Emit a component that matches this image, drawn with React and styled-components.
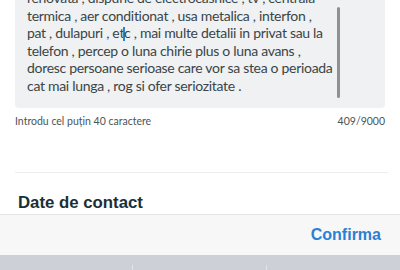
import styled, { createGlobalStyle } from 'styled-components'

const lines = [
  'renovata , dispune de electrocasnice , tv , centrala',
  'termica , aer conditionat , usa metalica , interfon ,',
  null,
  'telefon , percep o luna chirie plus o luna avans ,',
  'doresc persoane serioase care vor sa stea o perioada',
  'cat mai lunga , rog si ofer seriozitate .',
]

export default function App() {
  return (
    <Page>
      <GlobalStyle />
      <Editor>
        <TextBox>
          <Body>
            {lines.map((line, i) =>
              line === null ? (
                <Line key={i}>
                  pat , dulapuri , et
                  <Caret />c , mai multe detalii in privat sau la
                </Line>
              ) : (
                <Line key={i}>{line}</Line>
              )
            )}
          </Body>
          <Scrollbar />
        </TextBox>
        <Hint>
          <span>Introdu cel puțin 40 caractere</span>
          <span>409/9000</span>
        </Hint>
      </Editor>
      <Divider />
      <SectionTitle>Date de contact</SectionTitle>
      <ActionBar>
        <ConfirmButton>Confirma</ConfirmButton>
      </ActionBar>
      <Keyboard>
        <Key />
        <Key />
        <Key />
      </Keyboard>
    </Page>
  )
}

const GlobalStyle = createGlobalStyle`
  html, body {
    margin: 0;
    padding: 0;
    background: #fff;
  }
  body {
    width: 400px;
    height: 270px;
    overflow: hidden;
  }
`

const Page = styled.div`
  width: 400px;
  height: 270px;
  display: flex;
  flex-direction: column;
  overflow: hidden;
  font-family: Lato, 'Noto Sans', sans-serif;
`

const Editor = styled.div`
  padding: 0 15px;
`

const TextBox = styled.div`
  position: relative;
  height: 108px;
  overflow: hidden;
  background: #eff1f2;
  border-radius: 0 0 4px 4px;
`

const Body = styled.div`
  margin-top: -11px;
  padding-left: 12px;
  font-size: 14px;
  line-height: 17.5px;
  letter-spacing: -0.3px;
  color: #3a4548;
`

const Line = styled.div`
  white-space: nowrap;
`

const Caret = styled.span`
  display: inline-block;
  width: 1.5px;
  height: 14px;
  margin: 0 -0.75px;
  vertical-align: -3px;
  background: #2f7fd8;
`

const Scrollbar = styled.div`
  position: absolute;
  top: 7px;
  left: 322px;
  width: 2.5px;
  height: 91px;
  border-radius: 2px;
  background: #8e9296;
`

const Hint = styled.div`
  display: flex;
  justify-content: space-between;
  margin-top: 6px;
  font-size: 10.5px;
  line-height: 15px;
  color: #4a5558;
`

const Divider = styled.div`
  margin: 43px 12px 0 15px;
  height: 1px;
  background: #eceef0;
`

const SectionTitle = styled.h2`
  margin: 0;
  padding: 20px 0 0 18px;
  height: 41px;
  box-sizing: border-box;
  font-family: 'Liberation Sans', Arial, sans-serif;
  font-size: 16.8px;
  line-height: 20px;
  font-weight: 700;
  color: #17303a;
`

const ActionBar = styled.div`
  display: flex;
  justify-content: flex-end;
  align-items: center;
  height: 40px;
  padding-right: 19px;
  border-top: 1px solid #e3e5e7;
  background: #f7f7f8;
`

const ConfirmButton = styled.button`
  border: 0;
  padding: 0;
  background: none;
  font-family: 'Liberation Sans', Arial, sans-serif;
  font-size: 16px;
  font-weight: 700;
  color: #2b80d3;
`

const Keyboard = styled.div`
  flex: 1;
  display: grid;
  grid-template-columns: repeat(3, 1fr);
  align-items: end;
  background: #cdd0d7;
`

const Key = styled.div`
  height: 5px;
  border-right: 1px solid #e2e4e8;

  &:last-child {
    border-right: 0;
  }
`
